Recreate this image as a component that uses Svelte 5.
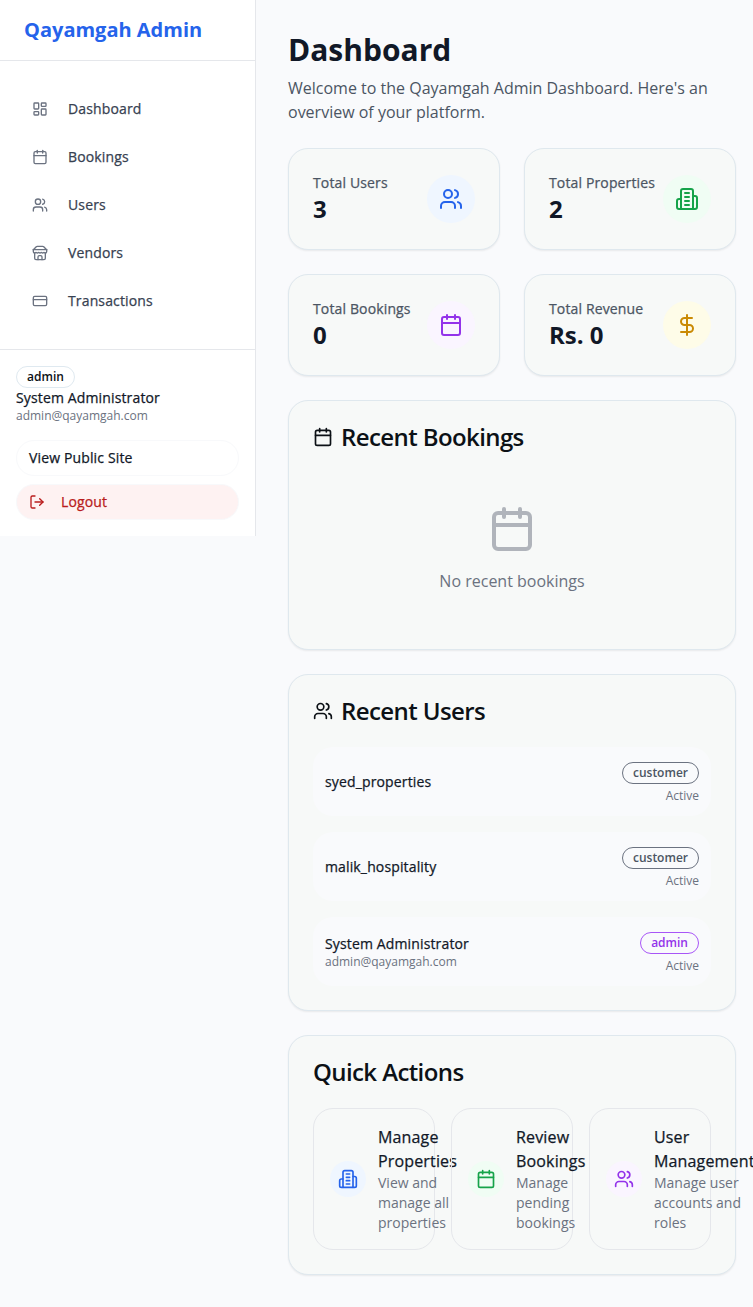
<script>
  const icons = {
    dashboard: '<rect width="7" height="9" x="3" y="3" rx="1"/><rect width="7" height="5" x="14" y="3" rx="1"/><rect width="7" height="9" x="14" y="12" rx="1"/><rect width="7" height="5" x="3" y="16" rx="1"/>',
    calendar: '<path d="M8 2v4"/><path d="M16 2v4"/><rect width="18" height="18" x="3" y="4" rx="2"/><path d="M3 10h18"/>',
    users: '<path d="M16 21v-2a4 4 0 0 0-4-4H6a4 4 0 0 0-4 4v2"/><circle cx="9" cy="7" r="4"/><path d="M22 21v-2a4 4 0 0 0-3-3.87"/><path d="M16 3.13a4 4 0 0 1 0 7.75"/>',
    store: '<path d="m2 7 4.41-4.41A2 2 0 0 1 7.83 2h8.34a2 2 0 0 1 1.42.59L22 7"/><path d="M4 12v8a2 2 0 0 0 2 2h12a2 2 0 0 0 2-2v-8"/><path d="M15 22v-4a2 2 0 0 0-2-2h-2a2 2 0 0 0-2 2v4"/><path d="M2 7h20"/><path d="M22 7v3a2 2 0 0 1-2 2a2.7 2.7 0 0 1-1.59-.63.7.7 0 0 0-.82 0A2.7 2.7 0 0 1 16 12a2.7 2.7 0 0 1-1.59-.63.7.7 0 0 0-.82 0A2.7 2.7 0 0 1 12 12a2.7 2.7 0 0 1-1.59-.63.7.7 0 0 0-.82 0A2.7 2.7 0 0 1 8 12a2.7 2.7 0 0 1-1.59-.63.7.7 0 0 0-.82 0A2.7 2.7 0 0 1 4 12a2 2 0 0 1-2-2V7"/>',
    card: '<rect width="20" height="14" x="2" y="5" rx="2"/><path d="M2 10h20"/>',
    building: '<path d="M6 22V4a2 2 0 0 1 2-2h8a2 2 0 0 1 2 2v18Z"/><path d="M6 12H4a2 2 0 0 0-2 2v6a2 2 0 0 0 2 2h2"/><path d="M18 9h2a2 2 0 0 1 2 2v9a2 2 0 0 1-2 2h-2"/><path d="M10 6h4"/><path d="M10 10h4"/><path d="M10 14h4"/><path d="M10 18h4"/>',
    dollar: '<path d="M12 2v20"/><path d="M17 5H9.5a3.5 3.5 0 0 0 0 7h5a3.5 3.5 0 0 1 0 7H6"/>',
    logout: '<path d="M9 21H5a2 2 0 0 1-2-2V5a2 2 0 0 1 2-2h4"/><path d="m16 17 5-5-5-5"/><path d="M21 12H9"/>'
  };

  const nav = [
    ['dashboard', 'Dashboard'],
    ['calendar', 'Bookings'],
    ['users', 'Users'],
    ['store', 'Vendors'],
    ['card', 'Transactions']
  ];

  const stats = [
    { label: 'Total Users', value: '3', icon: 'users', tone: 'blue' },
    { label: 'Total Properties', value: '2', icon: 'building', tone: 'green' },
    { label: 'Total Bookings', value: '0', icon: 'calendar', tone: 'purple' },
    { label: 'Total Revenue', value: 'Rs. 0', icon: 'dollar', tone: 'yellow' }
  ];

  const users = [
    { name: 'syed_properties', role: 'customer' },
    { name: 'malik_hospitality', role: 'customer' },
    { name: 'System Administrator', email: 'admin@qayamgah.com', role: 'admin' }
  ];

  const actions = [
    { title: 'Manage Properties', text: 'View and manage all properties', icon: 'building', tone: 'blue' },
    { title: 'Review Bookings', text: 'Manage pending bookings', icon: 'calendar', tone: 'green' },
    { title: 'User Management', text: 'Manage user accounts and roles', icon: 'users', tone: 'purple' }
  ];
</script>

{#snippet icon(name, size)}
  <svg width={size} height={size} viewBox="0 0 24 24" fill="none" stroke="currentColor" stroke-width="2" stroke-linecap="round" stroke-linejoin="round" aria-hidden="true">{@html icons[name]}</svg>
{/snippet}

<div class="layout">
  <aside>
    <div class="brand">Qayamgah Admin</div>
    <nav>
      {#each nav as [name, label]}
        <a href="#{name}">{@render icon(name, 16)}<span>{label}</span></a>
      {/each}
    </nav>
    <div class="account">
      <span class="badge">admin</span>
      <div class="name">System Administrator</div>
      <div class="email">admin@qayamgah.com</div>
      <button class="site">View Public Site</button>
      <button class="logout">{@render icon('logout', 16)}<span>Logout</span></button>
    </div>
  </aside>

  <main>
    <header>
      <h1>Dashboard</h1>
      <p>Welcome to the Qayamgah Admin Dashboard. Here's an overview of your platform.</p>
    </header>

    <div class="stats">
      {#each stats as s}
        <div class="card stat">
          <div>
            <div class="label">{s.label}</div>
            <div class="value">{s.value}</div>
          </div>
          <div class="disc large {s.tone}">{@render icon(s.icon, 24)}</div>
        </div>
      {/each}
    </div>

    <section class="card">
      <h2>{@render icon('calendar', 20)}Recent Bookings</h2>
      <div class="empty">
        {@render icon('calendar', 48)}
        <p>No recent bookings</p>
      </div>
    </section>

    <section class="card">
      <h2>{@render icon('users', 20)}Recent Users</h2>
      <div class="users">
        {#each users as u}
          <div class="user">
            <div>
              <div class="name">{u.name}</div>
              {#if u.email}<div class="email">{u.email}</div>{/if}
            </div>
            <div class="state">
              <span class="badge {u.role}">{u.role}</span>
              <span class="active">Active</span>
            </div>
          </div>
        {/each}
      </div>
    </section>

    <section class="card">
      <h2>Quick Actions</h2>
      <div class="actions">
        {#each actions as a}
          <div class="action">
            <div class="disc {a.tone}">{@render icon(a.icon, 20)}</div>
            <div>
              <div class="title">{a.title}</div>
              <div class="text">{a.text}</div>
            </div>
          </div>
        {/each}
      </div>
    </section>
  </main>
</div>

<style>
  :global(body) {
    background: #f9fafc;
    overflow-x: hidden;
  }
  .layout, .layout * { box-sizing: border-box; }
  .layout {
    display: flex;
    align-items: flex-start;
    min-height: 1307px;
    font-family: "Open Sans", "Noto Sans", sans-serif;
    font-size: 16px;
    line-height: 24px;
    color: #0c1116;
  }
  svg { display: block; flex-shrink: 0; }
  h1, h2, p { margin: 0; }

  aside {
    width: 256px;
    flex-shrink: 0;
    background: #fff;
    border-right: 1px solid #e5e7eb;
  }
  .brand {
    height: 61px;
    padding: 16px 24px;
    border-bottom: 1px solid #e5e7eb;
    font-size: 20px;
    line-height: 28px;
    font-weight: 700;
    color: #2563eb;
  }
  nav { padding: 24px 16px; }
  nav a {
    display: flex;
    align-items: center;
    gap: 20px;
    height: 48px;
    padding: 0 16px;
    font-size: 14px;
    color: #374151;
    text-decoration: none;
  }
  nav a :global(svg) { color: #6b7280; }
  .account {
    border-top: 1px solid #e5e7eb;
    padding: 16px;
    display: flex;
    flex-direction: column;
  }
  .badge {
    align-self: flex-start;
    padding: 2px 10px;
    border: 1px solid #dfe9f0;
    border-radius: 11px;
    font-size: 12px;
    line-height: 16px;
    font-weight: 600;
  }
  .badge.customer { color: #4b5563; border-color: #6b7280; }
  .badge.admin { color: #9333ea; border-color: #a855f7; }
  .name { font-size: 14px; line-height: 20px; color: #111827; }
  .email { font-size: 12px; line-height: 16px; color: #6b7280; }
  button {
    display: flex;
    align-items: center;
    gap: 16px;
    height: 36px;
    padding: 0 12px;
    border: 1px solid #f8f9fb;
    border-radius: 18px;
    background: #fff;
    font-family: inherit;
    font-size: 14px;
    line-height: 20px;
    color: #111827;
  }
  /* Open Sans has no static medium cut, so the regular one is thickened slightly */
  nav a, .name, button, .label, .title {
    font-weight: 500;
    letter-spacing: 0.01em;
    -webkit-text-stroke: 0.25px currentColor;
  }
  .site { margin: 16px 0 8px; }
  .logout { background: #fef2f2; color: #b91c1c; }

  main {
    flex: 1;
    min-width: 0;
    padding: 32px 17px 32px 32px;
    display: flex;
    flex-direction: column;
    gap: 24px;
  }
  h1 { font-size: 30px; line-height: 36px; font-weight: 700; color: #111827; }
  header p { margin-top: 8px; color: #4b5563; }
  .card {
    background: #f7f9f8;
    border: 1px solid #dfe8ee;
    border-radius: 20px;
    padding: 24px;
    box-shadow: 0 1px 2px rgba(0, 0, 0, 0.07);
  }
  .stats { display: grid; grid-template-columns: 1fr 1fr; gap: 24px; }
  .stat { display: flex; align-items: center; justify-content: space-between; }
  .label { font-size: 14px; line-height: 20px; color: #4b5563; white-space: nowrap; }
  .value { font-size: 24px; line-height: 32px; font-weight: 700; color: #111827; }
  .disc {
    width: 36px;
    height: 36px;
    flex-shrink: 0;
    border-radius: 50%;
    display: grid;
    place-items: center;
  }
  .large { width: 48px; height: 48px; }
  .blue { background: #eff6ff; color: #2563eb; }
  .green { background: #f0fdf4; color: #16a34a; }
  .purple { background: #faf5ff; color: #9333ea; }
  .yellow { background: #fefce8; color: #ca8a04; }

  h2 {
    display: flex;
    align-items: center;
    gap: 8px;
    font-size: 24px;
    line-height: 24px;
    font-weight: 600;
    letter-spacing: -0.6px;
    margin-bottom: 24px;
  }
  .empty {
    display: flex;
    flex-direction: column;
    align-items: center;
    gap: 16px;
    padding: 32px 0;
    color: #6b7280;
  }
  .empty :global(svg) { opacity: 0.5; }
  .users { display: grid; gap: 16px; }
  .user {
    display: flex;
    align-items: center;
    justify-content: space-between;
    height: 69px;
    padding: 12px;
    border-radius: 20px;
    background: #f9fafc;
  }
  .state { display: flex; flex-direction: column; gap: 4px; padding-top: 3px; }
  .state .badge, .active { align-self: flex-end; }
  .active { font-size: 12px; line-height: 16px; color: #6b7280; }
  .actions { display: grid; grid-template-columns: repeat(3, minmax(0, 1fr)); gap: 16px; }
  .action {
    display: flex;
    align-items: center;
    gap: 12px;
    padding: 16px;
    border: 1px solid #e5e7eb;
    border-radius: 20px;
  }
  .title { color: #111827; }
  .text { font-size: 14px; line-height: 20px; color: #6b7280; }
</style>
